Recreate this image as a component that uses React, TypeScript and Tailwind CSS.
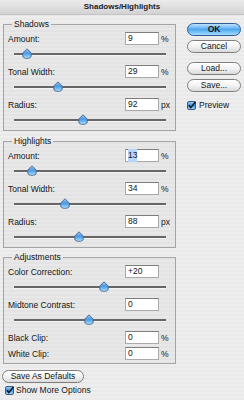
import React from "react";

function Thumb({ x }: { x: number }) {
  return (
    <svg
      width="10"
      height="11"
      viewBox="0 0 10 11"
      className="absolute top-[3px]"
      style={{ left: x - 5 }}
    >
      <defs>
        <linearGradient id="tg" x1="0" y1="0" x2="0" y2="1">
          <stop offset="0" stopColor="#a9cbee" />
          <stop offset="0.45" stopColor="#4a97e4" />
          <stop offset="0.75" stopColor="#78bff6" />
          <stop offset="1" stopColor="#c2e8ff" />
        </linearGradient>
      </defs>
      <path
        d="M5 0.8 L9.2 5 V8 Q9.2 10.3 5 10.3 Q0.8 10.3 0.8 8 V5 Z"
        fill="url(#tg)"
        stroke="#45668f"
        strokeWidth="0.9"
      />
    </svg>
  );
}

function Slider({ pos, last }: { pos: number; last?: boolean }) {
  return (
    <div className={`relative ml-[6px] mr-[7px] ${last ? "h-[19px]" : "h-[20px]"}`}>
      <div className="pt-[8px]">
        <div className="h-[2px] bg-[#666666]" />
        <div className="h-[1px] bg-[#f4f4f4]" />
      </div>
      <Thumb x={pos} />
    </div>
  );
}

function Field({
  label,
  value,
  unit,
  selected,
}: {
  label: string;
  value: string;
  unit?: string;
  selected?: boolean;
}) {
  return (
    <div className="flex items-center h-[13px]">
      <span className="flex-1 pt-[2px]">{label}</span>
      <div className="w-[34px] h-[13px] bg-white border border-[#a9a9a9] border-t-[#7d7d7d] flex items-center pl-[2px]">
        <span className={selected ? "bg-[#b5d5ff]" : ""}>{value}</span>
      </div>
      <span className="w-[12px] ml-[2px] pt-[1px]">{unit ?? ""}</span>
    </div>
  );
}

function Group({
  title,
  children,
  className,
}: {
  title: string;
  children: React.ReactNode;
  className?: string;
}) {
  return (
    <fieldset
      className={`border border-[#a4a4a4] bg-black/[0.025] pl-[4px] pr-[2px] ${className ?? ""}`}
    >
      <legend className="ml-[4px] px-[2px] leading-[10px]">{title}</legend>
      {children}
    </fieldset>
  );
}

function AquaButton({
  label,
  primary,
  className,
}: {
  label: string;
  primary?: boolean;
  className?: string;
}) {
  return (
    <div
      className={`h-[13px] rounded-full border flex items-center justify-center leading-none ${
        primary
          ? "border-[#2f5d95] bg-gradient-to-b from-[#bfe2fb] via-[#4fa8f0] to-[#a2dcfe] font-bold"
          : "border-[#7e7e7e] bg-gradient-to-b from-white via-[#f3f3f3] to-[#d9d9d9]"
      } ${className ?? ""}`}
    >
      {label}
    </div>
  );
}

function Check() {
  return (
    <svg width="9" height="9" viewBox="0 0 9 9" className="shrink-0">
      <defs>
        <linearGradient id="cg" x1="0" y1="0" x2="0" y2="1">
          <stop offset="0" stopColor="#a9d2f6" />
          <stop offset="0.5" stopColor="#3f8fe0" />
          <stop offset="1" stopColor="#a8e0ff" />
        </linearGradient>
      </defs>
      <rect x="0.5" y="0.5" width="8" height="8" rx="1.5" fill="url(#cg)" stroke="#3a5a86" />
      <path d="M2 4.3 L3.8 6.6 L8.6 0.6" fill="none" stroke="#111" strokeWidth="1.5" />
    </svg>
  );
}

export default function App() {
  return (
    <div className="w-[244px] h-[400px] overflow-hidden bg-[repeating-linear-gradient(180deg,#eeeeee_0px,#eeeeee_2px,#e9e9e9_2px,#e9e9e9_4px)] font-['Liberation_Sans',Arial,sans-serif] text-[8.5px] text-[#151515]">
      <div className="h-[15px] bg-gradient-to-b from-[#ebebeb] to-[#d3d3d3] border-b border-[#c2c2c2] flex items-center justify-center font-bold text-[8px] text-[#222]">
        Shadows/Highlights
      </div>
      <div className="flex">
        <div className="w-[173px] ml-[3px] mt-[4px]">
          <Group title="Shadows" className="pt-[3px] pb-0">
            <Field label="Amount:" value="9" unit="%" />
            <Slider pos={13} />
            <Field label="Tonal Width:" value="29" unit="%" />
            <Slider pos={44} />
            <Field label="Radius:" value="92" unit="px" />
            <Slider pos={69} last />
          </Group>
          <Group title="Highlights" className="mt-[5px] pt-[3px] pb-0">
            <Field label="Amount:" value="13" unit="%" selected />
            <Slider pos={18} />
            <Field label="Tonal Width:" value="34" unit="%" />
            <Slider pos={51} />
            <Field label="Radius:" value="88" unit="px" />
            <Slider pos={65} last />
          </Group>
          <Group title="Adjustments" className="mt-[4px] pt-[3px] pb-[3px]">
            <Field label="Color Correction:" value="+20" />
            <Slider pos={90} />
            <Field label="Midtone Contrast:" value="0" />
            <Slider pos={75} />
            <Field label="Black Clip:" value="0" unit="%" />
            <div className="h-[3px]" />
            <Field label="White Clip:" value="0" unit="%" />
          </Group>
          <div className="mt-[6px] -ml-[1px] w-[82px]">
            <AquaButton label="Save As Defaults" />
          </div>
          <div className="flex items-center gap-[2px] mt-[2px] ml-[2px] h-[10px]">
            <Check />
            <span>Show More Options</span>
          </div>
        </div>
        <div className="w-[54px] ml-[11px] mt-[8px] flex flex-col">
          <AquaButton label="OK" primary />
          <AquaButton label="Cancel" className="mt-[4px]" />
          <AquaButton label="Load..." className="mt-[9px]" />
          <AquaButton label="Save..." className="mt-[4px]" />
          <div className="flex items-center gap-[3px] mt-[9px] h-[9px]">
            <Check />
            <span>Preview</span>
          </div>
        </div>
      </div>
    </div>
  );
}
